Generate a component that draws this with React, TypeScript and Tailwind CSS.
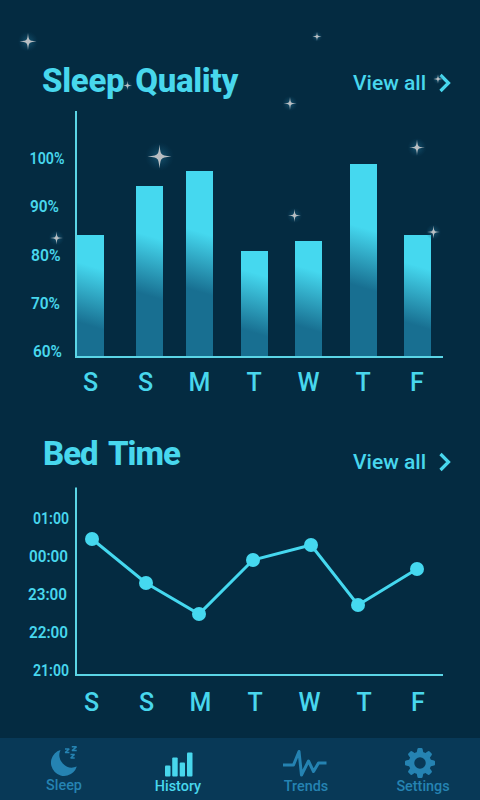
const stars = [
  { x: 28, y: 41.5, r: 8.5 },
  { x: 317, y: 36.5, r: 4.5 },
  { x: 127.5, y: 85.5, r: 4.5 },
  { x: 290, y: 103.5, r: 6.5 },
  { x: 438, y: 79, r: 4.5 },
  { x: 159.5, y: 156.5, r: 12 },
  { x: 417, y: 147.5, r: 8 },
  { x: 294.5, y: 215.5, r: 6.5 },
  { x: 433.5, y: 232, r: 6.5 },
  { x: 56.5, y: 238, r: 6.5 },
];

const days = ["S", "S", "M", "T", "W", "T", "F"];

// fade is where the gradient begins, in chart coordinates
const bars = [
  { x: 77, y: 235, fade: 266 },
  { x: 136, y: 186, fade: 236 },
  { x: 186, y: 171, fade: 232 },
  { x: 241, y: 251, fade: 273 },
  { x: 295, y: 241, fade: 269 },
  { x: 350, y: 164, fade: 228 },
  { x: 404, y: 235, fade: 266 },
];

const percents = [
  { label: "100%", x: 29.5, y: 164, width: 35 },
  { label: "90%", x: 30, y: 212, width: 29 },
  { label: "80%", x: 31, y: 261, width: 29.5 },
  { label: "70%", x: 31, y: 309, width: 29 },
  { label: "60%", x: 33, y: 357, width: 29 },
];

const times = [
  { label: "01:00", x: 33, y: 524, width: 36 },
  { label: "00:00", x: 29, y: 562, width: 39 },
  { label: "23:00", x: 28, y: 600, width: 39 },
  { label: "22:00", x: 29, y: 638, width: 39 },
  { label: "21:00", x: 33, y: 676, width: 36 },
];

const points = [
  [92, 539],
  [146, 583],
  [199, 614],
  [253, 560],
  [311, 545],
  [358, 605],
  [417, 569],
];

function Stars() {
  return (
    <svg className="pointer-events-none absolute inset-0" width="480" height="280">
      <defs>
        <radialGradient id="glow">
          <stop offset="0" stopColor="#2b7898" stopOpacity="0.6" />
          <stop offset="1" stopColor="#0b4b6c" stopOpacity="0" />
        </radialGradient>
      </defs>
      {stars.map((s) => (
        <g key={`${s.x}-${s.y}`} transform={`translate(${s.x} ${s.y}) scale(${s.r})`}>
          <circle r="1.2" fill="url(#glow)" />
          <path d="M0-1Q.07-.2.2-.2Q.2-.07 1 0Q.2.07.2.2Q.07.2 0 1Q-.07.2-.2.2Q-.2.07-1 0Q-.2-.07-.2-.2Q-.07-.2 0-1Z" fill="#b9bec2" />
        </g>
      ))}
    </svg>
  );
}

function ViewAll() {
  return (
    <button className="flex items-center">
      <span className="w-[73px] whitespace-nowrap text-left text-[21px] leading-6 font-medium">View all</span>
      <svg className="mr-px ml-[13px]" width="12" height="20" viewBox="0 0 12 20" fill="none" stroke="currentColor" strokeWidth="3.2">
        <path d="M1.500 2l8 8l-8 8" />
      </svg>
    </button>
  );
}

function DayLabels({ y, offset }: { y: number; offset: number }) {
  const xs = [90.5, 145.5, 199.5, 254, 308.5, 363, 417];
  return (
    <g fontSize="25" fontWeight="500" textAnchor="middle">
      {days.map((d, i) => (
        <text key={i} x={xs[i] + offset} y={y}>{d}</text>
      ))}
    </g>
  );
}

function QualityChart() {
  return (
    <svg className="block" width="480" height="300" viewBox="0 105 480 300" fill="currentColor">
      <defs>
        {bars.map((b, i) => (
          <linearGradient
            key={b.x}
            id={`bar-${i}`}
            gradientUnits="userSpaceOnUse"
            x1={b.x + 13.5}
            y1={b.fade}
            x2={b.x - 3}
            y2={b.fade + 55}
          >
            <stop offset="0" stopColor="#45d8ef" />
            <stop offset="1" stopColor="#186f91" />
          </linearGradient>
        ))}
      </defs>
      {bars.map((b, i) => (
        <rect key={b.x} x={b.x} y={b.y} width="27" height={356 - b.y} fill={`url(#bar-${i})`} />
      ))}
      <path d="M76 111v246h367" fill="none" stroke="#5bd5e6" strokeWidth="2" />
      <g fontSize="16" fontWeight="600">
        {percents.map((p) => (
          <text key={p.label} x={p.x} y={p.y} textLength={p.width} lengthAdjust="spacingAndGlyphs">{p.label}</text>
        ))}
      </g>
      <DayLabels y={391} offset={0} />
    </svg>
  );
}

function BedTimeChart() {
  return (
    <svg className="block" width="480" height="258" viewBox="0 480 480 258" fill="currentColor">
      <path d="M76 487.500v187.500h367" fill="none" stroke="#5bd5e6" strokeWidth="2" />
      <polyline points={points.map((p) => p.join(",")).join(" ")} fill="none" stroke="#45d8ef" strokeWidth="3" />
      {points.map(([x, y]) => (
        <circle key={x} cx={x} cy={y} r="7" fill="#45d8ef" />
      ))}
      <g fontSize="16" fontWeight="600">
        {times.map((t) => (
          <text key={t.label} x={t.x} y={t.y} textLength={t.width} lengthAdjust="spacingAndGlyphs">{t.label}</text>
        ))}
      </g>
      <DayLabels y={711} offset={1} />
    </svg>
  );
}

function MoonIcon() {
  return (
    <svg width="28" height="32" viewBox="0 0 28 32" fill="currentColor">
      <path d="M10.500 5A13.200 13.200 0 1 0 26.800 21.500A12.500 12.500 0 0 1 10.500 5Z" />
      <path d="M15 4h4.200l-4 3.500h4.200M21.800 1.800h4.700l-4.500 3.700h4.700M20.500 9.500h4l-3.800 3.500h4" fill="none" stroke="currentColor" strokeWidth="1.500" strokeLinejoin="bevel" />
    </svg>
  );
}

function BarsIcon() {
  return (
    <svg width="28" height="25" viewBox="0 0 28 25" fill="currentColor">
      <rect x="0" y="13.500" width="5.500" height="11" rx="1" />
      <rect x="7.200" y="5.500" width="5.500" height="19" rx="1" />
      <rect x="14.700" y="10.500" width="5.300" height="14" rx="1" />
      <rect x="22" y="0.500" width="5.500" height="24" rx="1" />
    </svg>
  );
}

function PulseIcon() {
  return (
    <svg width="44" height="30" viewBox="0 0 44 30" fill="none" stroke="currentColor" strokeWidth="3" strokeLinejoin="round">
      <path d="M0 17h10.500L16 3.500L18.500 27L25.500 13L30.500 23.500L35.500 15H43.500" />
    </svg>
  );
}

function GearIcon() {
  return (
    <svg width="30" height="30" viewBox="-15 -15 30 30" fill="currentColor">
      <circle r="8.500" fill="none" stroke="currentColor" strokeWidth="5.500" />
      {[0, 45, 90, 135, 180, 225, 270, 315].map((a) => (
        <path key={a} d="M-3.400-10L-2.600-14Q-2.400-15-1.400-15H1.400Q2.400-15 2.600-14L3.400-10Z" transform={`rotate(${a})`} />
      ))}
    </svg>
  );
}

const tabs = [
  { name: "Sleep", icon: <MoonIcon />, className: "ml-[45px] w-[38px] text-[#2583b2]", iconClass: "pb-[1px]", labelClass: "leading-[16px]" },
  { name: "History", icon: <BarsIcon />, className: "ml-[71px] w-[48px] text-[#48d7ed]", iconClass: "pb-[1px] pl-[2px]", labelClass: "leading-[18px]" },
  { name: "Trends", icon: <PulseIcon />, className: "ml-[81px] w-[46px] text-[#2583b2]", iconClass: "pr-[3px]", labelClass: "leading-[18px]" },
  { name: "Settings", icon: <GearIcon />, className: "ml-[67px] w-[54px] text-[#2583b2]", iconClass: "pr-[6px]", labelClass: "leading-[17px]" },
];

export default function App() {
  return (
    <div className="relative flex h-[800px] w-[480px] flex-col overflow-hidden bg-[#042b41] font-['Roboto',sans-serif] text-[#48d7ed]">
      <Stars />
      <header className="flex h-[105px] items-start justify-between pl-[42px] pr-[28px] pt-[61px]">
        <h1 className="whitespace-nowrap text-[33px] leading-[40px] font-extrabold tracking-[-0.3px] [word-spacing:3px]">Sleep Quality</h1>
        <div className="pt-[10px]"><ViewAll /></div>
      </header>
      <QualityChart />
      <header className="flex h-[75px] items-start justify-between pl-[43px] pr-[28px] pt-[29px]">
        <h2 className="whitespace-nowrap text-[33px] leading-[40px] font-extrabold tracking-[-1px] [word-spacing:4px]">Bed Time</h2>
        <div className="pt-[16px]"><ViewAll /></div>
      </header>
      <BedTimeChart />
      <nav className="flex h-[62px] bg-[#083957]">
        {tabs.map((t) => (
          <button key={t.name} className={`flex shrink-0 flex-col items-center ${t.className}`}>
            <span className={`flex h-[40px] items-end ${t.iconClass}`}>{t.icon}</span>
            <span className={`whitespace-nowrap text-[14.4px] font-medium ${t.labelClass}`}>{t.name}</span>
          </button>
        ))}
      </nav>
    </div>
  );
}
